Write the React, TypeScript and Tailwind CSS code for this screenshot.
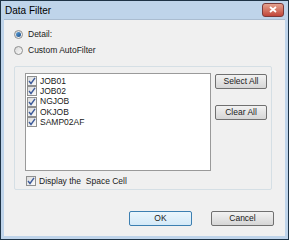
import React from "react";

const items = ["JOB01", "JOB02", "NGJOB", "OKJOB", "SAMP02AF"];

function Check() {
  return (
    <span className="w-[10px] h-[10px] border border-[#8e8f8f] bg-gradient-to-br from-[#dcdcdc] to-[#fbfbfb] flex items-center justify-center shrink-0">
      <svg width="8" height="8" viewBox="0 0 8 8">
        <path d="M1 4 L3 6.5 L7 0.8" stroke="#3d5b9a" strokeWidth="1.4" fill="none" />
      </svg>
    </span>
  );
}

function Radio({ on }: { on?: boolean }) {
  return (
    <span className="w-[9px] h-[9px] rounded-full border border-[#8e8f8f] bg-gradient-to-br from-[#d8d8d8] to-[#fafafa] flex items-center justify-center shrink-0">
      {on ? <span className="w-[5px] h-[5px] rounded-full bg-gradient-to-br from-[#5fa3da] to-[#1b4d8a]" /> : null}
    </span>
  );
}

function Btn({ label, def, w }: { label: string; def?: boolean; w: string }) {
  return (
    <div
      className={
        "h-[15px] rounded-[2px] border flex items-center justify-center text-[8.5px] text-[#1a1a1a] " +
        w +
        (def
          ? " border-[#3c7fb1] bg-gradient-to-b from-[#eaf6fd] to-[#d4e9f7]"
          : " border-[#707070] bg-gradient-to-b from-[#f2f2f2] to-[#d6d6d6]")
      }>
      {label}
    </div>
  );
}

export default function App() {
  return (
    <div className="w-[289px] h-[240px] bg-[#1e3346] p-px" style={{ fontFamily: '"Liberation Sans", Arial, sans-serif' }}>
      <div className="h-full bg-[#bfd4ea] flex flex-col px-[3px] pb-[3px]">
        <div className="h-[18px] flex items-center justify-between">
          <span className="text-[10px] text-black pl-[1px]">Data Filter</span>
          <div className="w-[22px] h-[14px] rounded-[3px] border border-[#7a3a3a] bg-gradient-to-b from-[#e4a18f] to-[#c0453a] flex items-center justify-center mr-[1px] mb-[1px]">
            <svg width="8" height="7" viewBox="0 0 8 7">
              <path d="M1 1 L7 6 M7 1 L1 6" stroke="white" strokeWidth="1.8" />
            </svg>
          </div>
        </div>
        <div className="flex-1 bg-[#f0f0f0] border-t border-[#aabcd0] flex flex-col text-[8.5px] text-[#1a1a1a]">
          <div className="flex items-center gap-[5px] pl-[10px] mt-[9px] h-[10px]">
            <Radio on />
            <span>Detail:</span>
          </div>
          <div className="flex items-center gap-[5px] pl-[10px] mt-[6px] h-[10px]">
            <Radio />
            <span>Custom AutoFilter</span>
          </div>
          <div className="ml-[10px] mt-[11px] w-[258px] h-[124px] border border-[#d5dfe5] rounded-[2px] pl-[10px] pt-[6px]">
            <div className="flex gap-[4px]">
              <div className="w-[186px] h-[98px] border border-[#9a9a9a] bg-white pl-px pt-[2px] flex flex-col">
                {items.map((t) => (
                  <div key={t} className="h-[10.25px] flex items-center gap-[3px]">
                    <Check />
                    <span>{t}</span>
                  </div>
                ))}
              </div>
              <div className="flex flex-col gap-[16px] pt-px">
                <Btn label="Select All" w="w-[52px]" />
                <Btn label="Clear All" w="w-[52px]" />
              </div>
            </div>
            <div className="flex items-center gap-[3px] mt-[4px] pl-px">
              <Check />
              <span>Display the&nbsp; Space Cell</span>
            </div>
          </div>
          <div className="flex justify-end gap-[19px] mt-[21px] pr-[11px]">
            <Btn label="OK" def w="w-[63px]" />
            <Btn label="Cancel" w="w-[63px]" />
          </div>
        </div>
      </div>
    </div>
  );
}
